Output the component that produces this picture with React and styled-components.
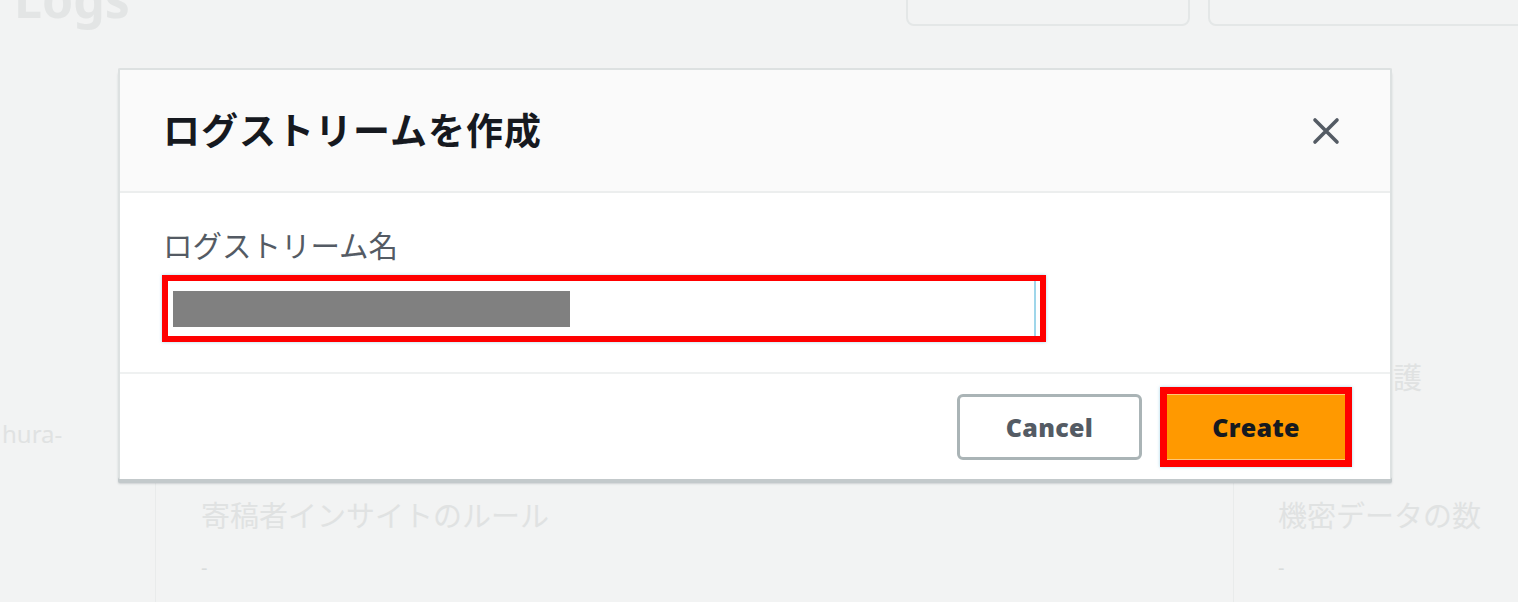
import React from "react";
import styled, { createGlobalStyle } from "styled-components";

const GlobalStyle = createGlobalStyle`
  html, body {
    margin: 0;
    padding: 0;
    background: #f2f3f3;
  }
  * {
    box-sizing: border-box;
  }
`;

const Page = styled.div`
  position: relative;
  width: 100%;
  height: 602px;
  overflow: hidden;
  background: #f2f3f3;
  font-family: "Noto Sans", "Noto Sans CJK JP", sans-serif;
`;

// faded console page behind the dialog
const TopRow = styled.div`
  display: flex;
  align-items: flex-end;
  height: 26px;
  padding-left: 14px;
`;

const PageTitle = styled.div`
  font-size: 50px;
  font-weight: 700;
  line-height: 50px;
  color: #e3e5e5;
  margin-bottom: 2px;
`;

const TopButtons = styled.div`
  display: flex;
  gap: 18px;
  margin-left: auto;
  margin-right: -20px;
  height: 100%;
`;

const GhostButton = styled.div`
  width: ${(p) => p.$w}px;
  height: 60px;
  margin-top: -34px;
  border: 2px solid #e4e7e7;
  border-radius: 8px;
`;

const MidRow = styled.div`
  display: flex;
  justify-content: space-between;
  height: 456px;
  padding: 0 96px 0 2px;
`;

const SideNote = styled.div`
  align-self: flex-start;
  margin-top: ${(p) => p.$top}px;
`;

const Columns = styled.div`
  display: grid;
  grid-template-columns: 155px 1078px 1fr;
  height: 120px;
`;

const Column = styled.div`
  display: flex;
  flex-direction: column;
  padding-left: ${(p) => p.$pad || 0}px;
  padding-top: 14px;
  border-left: ${(p) => (p.$line ? "1px solid #e9ebeb" : "none")};
`;

const FadedText = styled.div`
  font-size: ${(p) => p.$size || 29}px;
  line-height: 40px;
  color: #e0e2e2;
  white-space: nowrap;
`;

const FadedDash = styled.div`
  font-size: 20px;
  line-height: 24px;
  color: #d9dcdc;
  margin-top: 20px;
`;

// the dialog itself
const Modal = styled.div`
  position: absolute;
  left: 118px;
  top: 68px;
  width: 1274px;
  display: flex;
  flex-direction: column;
  background: #ffffff;
  border: 2px solid #dde1e1;
  border-bottom: none;
  border-radius: 2px;
  box-shadow: 0 4px 0 #c3c9cb, 0 5px 2px rgba(120, 130, 135, 0.3);
`;

const ModalHeader = styled.div`
  display: flex;
  align-items: center;
  height: 123px;
  padding: 0 46px 0 43px;
  background: #fafafa;
  border-bottom: 2px solid #eceeee;
`;

const ModalTitle = styled.h2`
  margin: 0 0 4px;
  font-family: "Noto Sans CJK JP", sans-serif;
  font-size: 37px;
  font-weight: 700;
  letter-spacing: 1px;
  color: #16191f;
`;

const CloseButton = styled.button`
  margin-left: auto;
  width: 36px;
  height: 36px;
  padding: 0;
  border: none;
  background: none;
  display: flex;
  align-items: center;
  justify-content: center;
  cursor: pointer;
`;

const ModalBody = styled.div`
  display: flex;
  flex-direction: column;
  padding: 31px 43px 30px 42px;
  border-bottom: 2px solid #eff1f1;
`;

const FieldLabel = styled.label`
  font-family: "Noto Sans CJK JP", sans-serif;
  font-size: 29.5px;
  line-height: 40px;
  color: #545b64;
  margin-bottom: 11px;
  padding-left: 1px;
`;

const Highlight = styled.div`
  display: flex;
  width: ${(p) => p.$w}px;
  height: ${(p) => p.$h}px;
  border: ${(p) => p.$b}px solid #ff0000;
  box-shadow: 0 0 3px rgba(80, 180, 220, 0.5);
`;

const NameInput = styled.div`
  flex: 1;
  display: flex;
  align-items: center;
  padding-left: 5px;
  margin-right: 4px;
  background: #ffffff;
  border-right: 2px solid #9fd6ea;
`;

const Redacted = styled.div`
  width: 397px;
  height: 36px;
  background: #808080;
`;

const ModalFooter = styled.div`
  display: flex;
  align-items: center;
  justify-content: flex-end;
  gap: 18px;
  height: 105px;
  padding-right: 38px;
`;

const Button = styled.button`
  font-family: "Open Sans", "Noto Sans", sans-serif;
  font-size: 25px;
  font-weight: 800;
  letter-spacing: 0.3px;
  cursor: pointer;
  display: flex;
  align-items: center;
  justify-content: center;
  padding: 0;
`;

const CancelButton = styled(Button)`
  width: 185px;
  height: 66px;
  background: #ffffff;
  color: #545b64;
  border: 3px solid #aab4b6;
  border-radius: 6px;
`;

const CreateButton = styled(Button)`
  flex: 1;
  background: #ff9900;
  color: #16191f;
  border: none;
  border-top: 1px solid #ffc777;
  border-bottom: 1px solid #ffc777;
`;

function CloseIcon() {
  return (
    <svg width="30" height="30" viewBox="0 0 30 30">
      <path
        d="M4 4 L26 26 M26 4 L4 26"
        stroke="#545b64"
        strokeWidth="3.6"
        strokeLinecap="round"
        fill="none"
      />
    </svg>
  );
}

function App() {
  return (
    <Page>
      <GlobalStyle />
      <TopRow>
        <PageTitle>Logs</PageTitle>
        <TopButtons>
          <GhostButton $w={284} />
          <GhostButton $w={330} />
        </TopButtons>
      </TopRow>

      <MidRow>
        <SideNote $top={388}>
          <FadedText $size={24}>hura-</FadedText>
        </SideNote>
        <SideNote $top={332}>
          <FadedText>護</FadedText>
        </SideNote>
      </MidRow>

      <Columns>
        <Column />
        <Column $line $pad={45}>
          <FadedText>寄稿者インサイトのルール</FadedText>
          <FadedDash>-</FadedDash>
        </Column>
        <Column $line $pad={44}>
          <FadedText>機密データの数</FadedText>
          <FadedDash>-</FadedDash>
        </Column>
      </Columns>

      <Modal>
        <ModalHeader>
          <ModalTitle>ログストリームを作成</ModalTitle>
          <CloseButton aria-label="Close">
            <CloseIcon />
          </CloseButton>
        </ModalHeader>
        <ModalBody>
          <FieldLabel>ログストリーム名</FieldLabel>
          <Highlight $w={884} $h={67} $b={6}>
            <NameInput>
              <Redacted />
            </NameInput>
          </Highlight>
        </ModalBody>
        <ModalFooter>
          <CancelButton>Cancel</CancelButton>
          <Highlight $w={192} $h={80} $b={7}>
            <CreateButton>Create</CreateButton>
          </Highlight>
        </ModalFooter>
      </Modal>
    </Page>
  );
}

export default App;
